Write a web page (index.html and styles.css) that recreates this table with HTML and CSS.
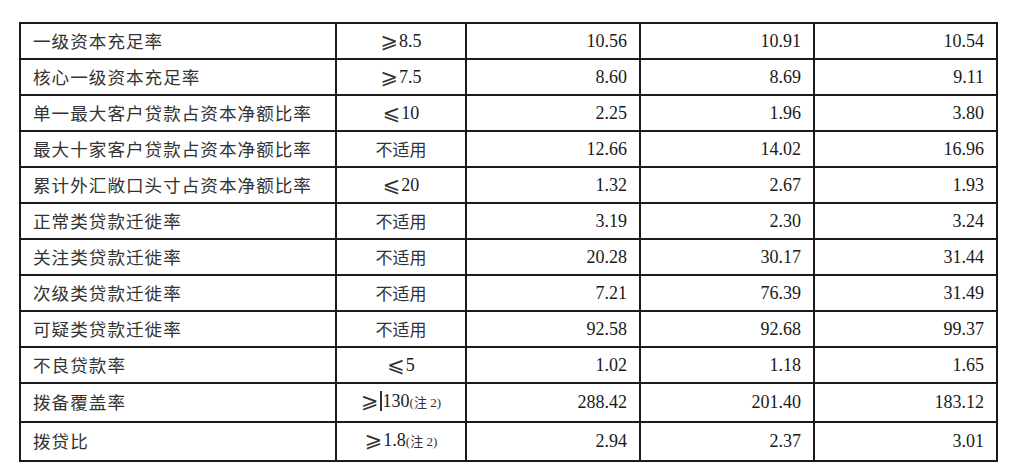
FILE: index.html
```html
<!DOCTYPE html>
<html lang="zh-CN">
<head>
<meta charset="utf-8">
<title>监管指标</title>
<link rel="stylesheet" href="styles.css">
</head>
<body>
<table class="grid">
  <colgroup>
    <col class="c-name"><col class="c-std"><col class="c-num"><col class="c-num"><col class="c-last">
  </colgroup>
  <tbody>
    <tr><td class="name">一级资本充足率</td><td class="std"><span class="op">⩾</span>8.5</td><td class="num">10.56</td><td class="num">10.91</td><td class="num">10.54</td></tr>
    <tr><td class="name">核心一级资本充足率</td><td class="std"><span class="op">⩾</span>7.5</td><td class="num">8.60</td><td class="num">8.69</td><td class="num">9.11</td></tr>
    <tr><td class="name">单一最大客户贷款占资本净额比率</td><td class="std"><span class="op">⩽</span>10</td><td class="num">2.25</td><td class="num">1.96</td><td class="num">3.80</td></tr>
    <tr><td class="name">最大十家客户贷款占资本净额比率</td><td class="std cn">不适用</td><td class="num">12.66</td><td class="num">14.02</td><td class="num">16.96</td></tr>
    <tr><td class="name">累计外汇敞口头寸占资本净额比率</td><td class="std"><span class="op">⩽</span>20</td><td class="num">1.32</td><td class="num">2.67</td><td class="num">1.93</td></tr>
    <tr><td class="name">正常类贷款迁徙率</td><td class="std cn">不适用</td><td class="num">3.19</td><td class="num">2.30</td><td class="num">3.24</td></tr>
    <tr><td class="name">关注类贷款迁徙率</td><td class="std cn">不适用</td><td class="num">20.28</td><td class="num">30.17</td><td class="num">31.44</td></tr>
    <tr><td class="name">次级类贷款迁徙率</td><td class="std cn">不适用</td><td class="num">7.21</td><td class="num">76.39</td><td class="num">31.49</td></tr>
    <tr><td class="name">可疑类贷款迁徙率</td><td class="std cn">不适用</td><td class="num">92.58</td><td class="num">92.68</td><td class="num">99.37</td></tr>
    <tr><td class="name">不良贷款率</td><td class="std"><span class="op">⩽</span>5</td><td class="num">1.02</td><td class="num">1.18</td><td class="num">1.65</td></tr>
    <tr><td class="name">拨备覆盖率</td><td class="std"><span class="op">⩾</span><span class="caret"></span>130<span class="note">(注 2)</span></td><td class="num">288.42</td><td class="num">201.40</td><td class="num">183.12</td></tr>
    <tr><td class="name">拨贷比</td><td class="std"><span class="op">⩾</span>1.8<span class="note">(注 2)</span></td><td class="num">2.94</td><td class="num">2.37</td><td class="num">3.01</td></tr>
  </tbody>
</table>
</body>
</html>
```

FILE: styles.css
```css
html, body {
  margin: 0;
  padding: 0;
  background: #ffffff;
}

body {
  padding: 22px 0 0 19px;
}

.grid {
  border-collapse: collapse;
  table-layout: fixed;
  width: 978px;
  height: 440px;
  font-family: "Liberation Serif", "Noto Sans CJK SC", serif;
  color: #1a1a1a;
}

.c-name { width: 316px; }
.c-std { width: 130px; }
.c-num { width: 174px; }
.c-last { width: 183px; }

.grid td {
  border: 2px solid #1a1a1a;
  padding: 0;
  line-height: 20px;
  vertical-align: middle;
  white-space: nowrap;
}

.name {
  font-family: "Noto Sans CJK SC", sans-serif;
  font-size: 17.6px;
  letter-spacing: 1px;
  color: #333;
  padding-left: 12px !important;
}

.std {
  text-align: center;
  font-size: 18px;
}

.std.cn {
  font-family: "Noto Sans CJK SC", sans-serif;
  font-size: 17px;
  color: #333;
}

.op {
  font-family: "DejaVu Sans", sans-serif;
  font-size: 21px;
  color: #333;
  margin-right: 1px;
  vertical-align: -1px;
}

.caret {
  display: inline-block;
  width: 2px;
  height: 20px;
  background: #333;
  vertical-align: -4px;
  margin-right: 1px;
}

.note {
  font-family: "Liberation Serif", "Noto Sans CJK SC", serif;
  font-size: 13px;
  color: #333;
}

.num {
  text-align: right;
  font-size: 18px;
  padding-right: 12px !important;
}
```
